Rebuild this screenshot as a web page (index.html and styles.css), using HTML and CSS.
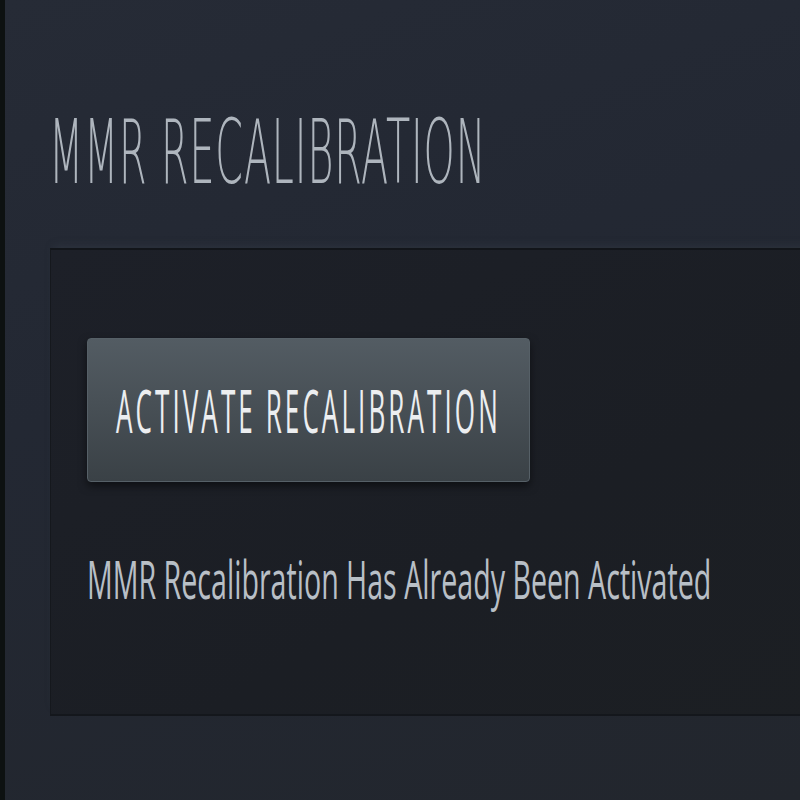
FILE: index.html
```html
<!DOCTYPE html>
<html>
<head>
<meta charset="utf-8">
<link rel="stylesheet" href="styles.css">
</head>
<body>
<div class="page">
  <div class="edge"></div>
  <main class="content">
    <h1 class="title"><span class="squeeze title-text">MMR RECALIBRATION</span></h1>
    <section class="panel">
      <button class="btn"><span class="squeeze btn-text">ACTIVATE RECALIBRATION</span></button>
      <p class="status"><span class="squeeze status-text">MMR Recalibration Has Already Been Activated</span></p>
    </section>
  </main>
</div>
</body>
</html>
```
FILE: styles.css
```css
html, body {
  margin: 0;
  padding: 0;
  width: 800px;
  height: 800px;
  overflow: hidden;
  background: #232833;
}
.page {
  display: flex;
  width: 800px;
  height: 800px;
  background: linear-gradient(160deg, #262b36 0%, #232833 40%, #22262d 100%);
}
.edge {
  width: 5px;
  flex: none;
  background: #0d1111;
}
.content {
  flex: 1;
  padding-left: 44px;
  padding-top: 108px;
  overflow: hidden;
}
.squeeze {
  display: inline-block;
  white-space: nowrap;
  transform-origin: 0 50%;
}
.title {
  margin: 0 0 51px 0;
  font-family: "DejaVu Sans", sans-serif;
  font-weight: 200;
  font-size: 89px;
  line-height: 89px;
  color: #aeb5bd;
  height: 89px;
}
.title-text {
  transform: scaleX(0.445);
  letter-spacing: 2px;
}
.panel {
  width: 800px;
  height: 468px;
  box-sizing: border-box;
  margin-left: 1px;
  background: linear-gradient(150deg, #1d2028 0%, #1b1e24 60%, #1c1f23 100%);
  border-top: 2px solid #12151a;
  border-bottom: 2px solid #14171c;
  border-left: 1px solid #15181d;
  box-shadow: 0 -6px 8px -4px rgba(60, 68, 80, 0.35);
  padding: 88px 0 0 36px;
}
.btn {
  display: flex;
  align-items: center;
  justify-content: center;
  width: 443px;
  height: 144px;
  margin: 0;
  padding: 0;
  border: 1px solid #566067;
  border-radius: 4px;
  background: linear-gradient(180deg, #535c63 0%, #485056 45%, #3a4146 100%);
  box-shadow: 0 4px 8px rgba(0, 0, 0, 0.5);
  overflow: hidden;
}
.btn-text {
  font-family: "Open Sans", sans-serif;
  font-weight: 400;
  font-size: 60px;
  line-height: 60px;
  color: #eceef0;
  letter-spacing: 7px;
  transform: scaleX(0.435);
  transform-origin: 50% 50%;
}
.status {
  margin: 70px 0 0 0;
  font-family: "Open Sans", sans-serif;
  font-weight: 500;
  font-size: 53px;
  line-height: 53px;
  height: 53px;
  color: #b8bfc6;
}
.status-text {
  transform: scaleX(0.54);
}
```
